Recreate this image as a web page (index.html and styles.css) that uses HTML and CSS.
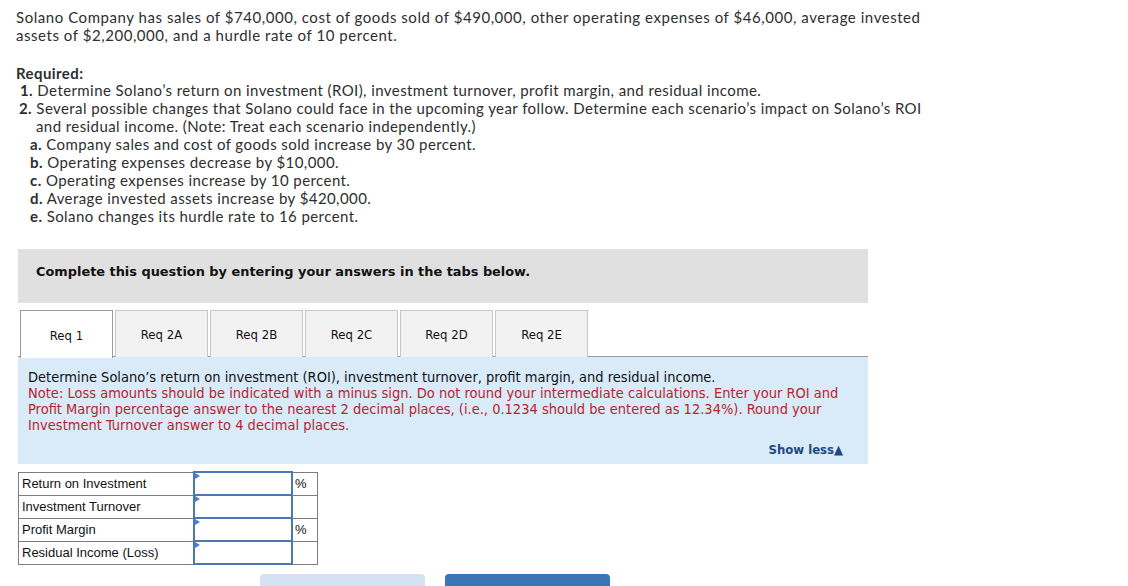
FILE: index.html
```html
<!DOCTYPE html>
<html>
<head>
<meta charset="utf-8">
<link rel="stylesheet" href="styles.css">
</head>
<body>
<div class="page">
  <p class="intro">Solano Company has sales of $740,000, cost of goods sold of $490,000, other operating expenses of $46,000, average invested assets of $2,200,000, and a hurdle rate of 10 percent.</p>

  <div class="required">
    <div class="req-title">Required:</div>
    <div class="item n1"><b>1.</b> Determine Solano’s return on investment (ROI), investment turnover, profit margin, and residual income.</div>
    <div class="item n2"><b>2.</b> Several possible changes that Solano could face in the upcoming year follow. Determine each scenario’s impact on Solano’s ROI<br><span class="cont">and residual income. (Note: Treat each scenario independently.)</span></div>
    <div class="sub"><b>a.</b> Company sales and cost of goods sold increase by 30 percent.</div>
    <div class="sub"><b>b.</b> Operating expenses decrease by $10,000.</div>
    <div class="sub"><b>c.</b> Operating expenses increase by 10 percent.</div>
    <div class="sub"><b>d.</b> Average invested assets increase by $420,000.</div>
    <div class="sub"><b>e.</b> Solano changes its hurdle rate to 16 percent.</div>
  </div>

  <div class="banner">Complete this question by entering your answers in the tabs below.</div>

  <div class="tabs">
    <div class="tab active">Req 1</div>
    <div class="tab">Req 2A</div>
    <div class="tab">Req 2B</div>
    <div class="tab">Req 2C</div>
    <div class="tab">Req 2D</div>
    <div class="tab">Req 2E</div>
  </div>

  <div class="panel">
    <div class="panel-main">Determine Solano’s return on investment (ROI), investment turnover, profit margin, and residual income.</div>
    <div class="panel-note">Note: Loss amounts should be indicated with a minus sign. Do not round your intermediate calculations. Enter your ROI and Profit Margin percentage answer to the nearest 2 decimal places, (i.e., 0.1234 should be entered as 12.34%). Round your Investment Turnover answer to 4 decimal places.</div>
    <div class="show-less">Show less▲</div>
  </div>

  <table class="answers">
    <tr><td class="label">Return on Investment</td><td class="input"><span class="flag"></span></td><td class="unit">%</td></tr>
    <tr><td class="label">Investment Turnover</td><td class="input"><span class="flag"></span></td><td class="unit"></td></tr>
    <tr><td class="label">Profit Margin</td><td class="input"><span class="flag"></span></td><td class="unit">%</td></tr>
    <tr><td class="label">Residual Income (Loss)</td><td class="input"><span class="flag"></span></td><td class="unit"></td></tr>
  </table>

  <div class="nav">
    <div class="btn prev">&lt; Req 1</div>
    <div class="btn next">Req 2A &gt;</div>
  </div>
</div>
</body>
</html>
```

FILE: styles.css
```css
html, body {
  margin: 0;
  padding: 0;
  background: #fff;
}
body {
  overflow: hidden;
  height: 586px;
}
.page {
  padding: 8px 0 0 16px;
  width: 1000px;
  font-family: Lato, "Open Sans", sans-serif;
  font-size: 15px;
  letter-spacing: 0.42px;
  color: #2e2e2e;
}
.intro {
  margin: 0;
  line-height: 18px;
  width: 915px;
  letter-spacing: 0.55px;
}
.required {
  margin-top: 20px;
  line-height: 18px;
}
.req-title {
  font-weight: bold;
  margin-bottom: -1px;
}
.item {
  padding-left: 4px;
}
.item.n2 {
  padding-left: 3px;
}
.item .cont {
  padding-left: 17px;
}
.sub {
  padding-left: 14px;
}
.banner {
  margin-top: 24px;
  width: 850px;
  height: 54px;
  box-sizing: border-box;
  margin-left: 2px;
  padding: 15px 0 0 18px;
  background: #e0e0e0;
  font-family: "DejaVu Sans", sans-serif;
  font-weight: bold;
  font-size: 12.9px;
  letter-spacing: 0;
  color: #111;
}
.tabs {
  display: flex;
  gap: 2px;
  margin: 7px 0 0 4px;
  height: 47px;
  letter-spacing: 0;
}
.tab {
  width: 93px;
  box-sizing: border-box;
  border: 1px solid #c6c6c6;
  border-bottom: none;
  background: #f2f2f2;
  display: flex;
  align-items: center;
  justify-content: center;
  font-family: "DejaVu Sans Condensed", "DejaVu Sans", sans-serif;
  font-size: 13px;
  color: #111;
  padding-top: 1px;
}
.tab.active {
  background: #fff;
  border-color: #9a9a9a;
  position: relative;
  z-index: 1;
  height: 48px;
}
.panel {
  margin-left: 2px;
  width: 850px;
  box-sizing: border-box;
  border-top: 1px solid #9a9a9a;
  margin-top: -1px;
  background: #d9ebf9;
  padding: 12px 22px 8px 10px;
  font-family: "DejaVu Sans Condensed", "DejaVu Sans", sans-serif;
  font-size: 14.5px;
  letter-spacing: 0;
  line-height: 16px;
  height: 108px;
}
.panel-main {
  color: #111;
}
.panel-note {
  color: #b8252b;
}
.show-less {
  text-align: right;
  font-family: "DejaVu Sans Condensed", "DejaVu Sans", sans-serif;
  font-weight: bold;
  color: #1d4a80;
  margin-top: 9px;
  margin-right: 3px;
  font-size: 13px;
}
.answers {
  border-collapse: collapse;
  margin: 7px 0 0 2px;
  font-family: "Liberation Sans", Arial, sans-serif;
  font-size: 13px;
  letter-spacing: 0;
  color: #111;
}
.answers td {
  border: 1px solid #7d7d7d;
  height: 21px;
  padding: 0;
}
.answers .label {
  width: 171px;
  padding-left: 3px;
}
.answers .input {
  width: 96px;
  border: 2px solid #4a78b0;
  position: relative;
}
.answers .flag {
  position: absolute;
  left: 0;
  top: 0;
  width: 0;
  height: 0;
  border-top: 3px solid transparent;
  border-bottom: 3px solid transparent;
  border-left: 5px solid #4a7fd0;
}
.answers .unit {
  width: 22px;
  padding-left: 2px;
}
.nav {
  display: flex;
  gap: 20px;
  margin: 9px 0 0 244px;
  letter-spacing: 0;
}
.btn {
  width: 165px;
  height: 40px;
  border-radius: 4px 4px 0 0;
  font-family: "DejaVu Sans", sans-serif;
  font-weight: bold;
  font-size: 14px;
  text-align: center;
  padding-top: 9px;
  box-sizing: border-box;
}
.btn.prev {
  background: #d5e2f1;
  color: #9aaac0;
}
.btn.next {
  background: #3a76b6;
  color: #fff;
}
```
